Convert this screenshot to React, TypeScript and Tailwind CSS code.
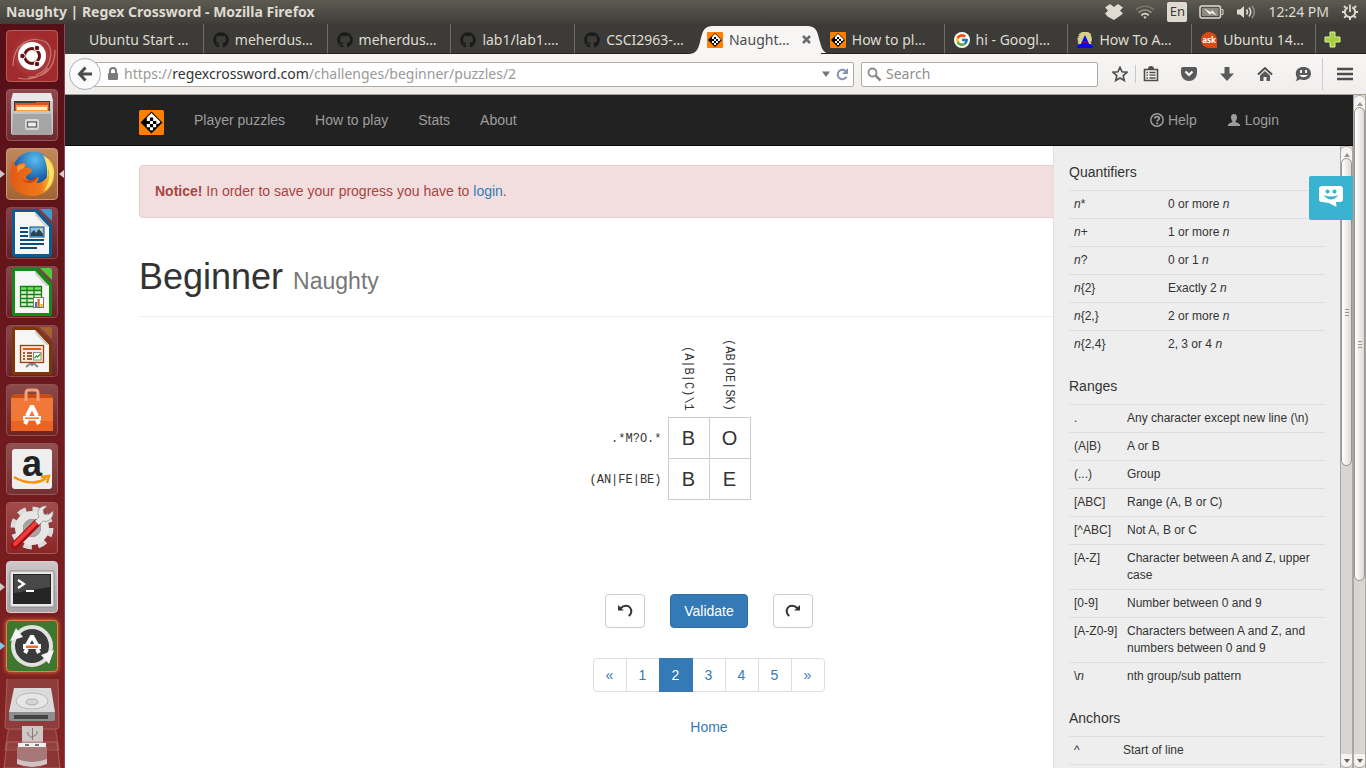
import React, { useState } from "react";
import { FaGithub } from "react-icons/fa";
import { FcGoogle } from "react-icons/fc";

const UI_FONT = "font-['Noto_Sans',sans-serif]";

/* ---------- shared drawings ---------- */

function CrosswordLogo({ className }: { className: string }) {
  return (
    <svg viewBox="0 0 24 24" className={className} aria-hidden="true">
      <rect width="24" height="24" rx="1.5" fill="#ff8000" />
      <path d="M12 1.500 22.500 12 12 22.500 1.500 12Z" fill="#000" />
      <path d="M12 2.800 20.800 11.600 18.500 13.500H16.500V10.500H13.500V7.500H10.500V4.500Z" fill="#fff" />
      <path d="M7.500 7.500h3v3h-3zM10.500 10.500h3v3h-3zM13.500 13.500h3v3h-3zM7.500 13.500h3v3h-3zM10.500 16.500h3v3h-3zM7.500 7.300 10.500 4.300V7.500z" fill="#fff" />
      <path d="M10.500 7.500h3v3h-3zM13.500 10.500h3v3h-3z" fill="#000" />
    </svg>
  );
}

function WizardIcon() {
  return (
    <svg viewBox="0 0 16 16" className="size-4" aria-hidden="true">
      <path d="M5 0h6l3 2 1 4-1 8H2L0 7l2-5z" fill="#d6d08b" />
      <path d="M2 3 0 8l2 2M14 3l2 5-2 3" stroke="#222" strokeDasharray="1 1" fill="none" />
      <path d="M8 3 14 16H2Z" fill="#0808ee" />
      <path d="M0 16c1-4 2-4 4-4l1 4zM16 16c-1-4-2-4-4-4l-1 4z" fill="#0808ee" />
      <path d="M6 9h4v2H6z" fill="#a00030" />
    </svg>
  );
}

function AskIcon() {
  return (
    <span className="flex size-4 items-center justify-center rounded-full rounded-br-none bg-[#dd4814] text-[8px] font-bold leading-none text-white">
      ask
    </span>
  );
}

/* ---------- top panel ---------- */

function TopPanel() {
  return (
    <header className={`flex h-6 shrink-0 items-center justify-between bg-linear-to-b from-[#5d5b51] to-[#3e3d39] pl-1.5 pr-[7px] text-[#dfdbd2] ${UI_FONT}`}>
      <span className="text-sm font-bold">Naughty | Regex Crossword - Mozilla Firefox</span>
      <div className="flex items-center gap-3">
        <svg viewBox="0 0 18 16" className="h-4 w-[18px]" fill="currentColor" aria-hidden="true">
          <path d="M5 0 9 3l4-3 5 3.500-3 3 3 3-2.500 2L9 16l-6.500-3.500L0 9.500l3-3-3-3z" />
        </svg>
        <svg viewBox="0 0 20 16" className="h-4 w-5" fill="none" strokeWidth="1.7" aria-hidden="true">
          <path d="M1 6c5-5 13-5 18 0" stroke="#77756c" />
          <path d="M3.600 8.700c3.700-3.600 9.100-3.600 12.800 0" stroke="#99968c" />
          <path d="M6.300 11.300c2.200-2.100 5.200-2.100 7.400 0" stroke="#dfdbd2" />
          <path d="M8.300 12.600h3.400L10 15z" fill="#dfdbd2" />
        </svg>
        <span className="flex size-5 items-center justify-center rounded-[2px] bg-[#dfdbd2] text-[13px] text-[#3c3b37]">En</span>
        <svg viewBox="0 0 25 14" className="h-[14px] w-[25px]" aria-hidden="true">
          <rect x="1" y="1" width="20.500" height="12" rx="2" fill="none" stroke="#dfdbd2" strokeWidth="1.500" />
          <rect x="3" y="3" width="16.500" height="8" fill="#8d8a81" />
          <path d="M22.500 4.500h1.500v5h-1.500" stroke="#dfdbd2" fill="none" />
          <path d="m5 3.500 7 3.500 1-2 5 5.500-6-2.500-1 2z" fill="#f4f1ea" />
        </svg>
        <svg viewBox="0 0 20 16" className="h-4 w-5" fill="none" strokeWidth="1.600" aria-hidden="true">
          <path d="M1 5.500h3L8 2v12l-4-3.500H1z" fill="#dfdbd2" />
          <path d="M10.500 5.500q2 2.500 0 5M13 3.500q3.500 4.500 0 9" stroke="#dfdbd2" />
          <path d="M15.800 1.800q5 6.200 0 12.400" stroke="#8d8a81" />
        </svg>
        <span className="text-sm">12:24 PM</span>
        <svg viewBox="0 0 18 18" className="size-[18px]" fill="none" stroke="#dfdbd2" aria-hidden="true">
          <path d="M6.800 4.300a5.200 5.200 0 1 0 4.400 0" strokeWidth="2" />
          <path d="M9 1.500V9" strokeWidth="1.800" />
          <path d="m4.800 4.800-1.800-1.800M13.200 4.800l1.800-1.800M3.500 9H1M17 9h-2.500M5 13l-1.800 1.800M13 13l1.800 1.800M9 14.500V17" strokeWidth="2" />
        </svg>
      </div>
    </header>
  );
}

/* ---------- launcher ---------- */

function Document({ color, corner, children }: { color: string; corner: string; children: React.ReactNode }) {
  return (
    <>
      <path d="M6 4q0-2 2-2h23l15 16v30q0 2-2 2H8q-2 0-2-2z" fill={color} />
      <path d="M34 2h10q2 0 2 2v10z" fill={corner} />
      <path d="M9 5h20l14 15v27H9z" fill="#f6f6f6" />
      <path d="M29 5v3l11 12h3z" fill="#cfcfcf" />
      {children}
    </>
  );
}

function UbuntuIcon() {
  return (
    <>
      <defs>
        <radialGradient id="dash">
          <stop offset="0" stopColor="#e08f8f" />
          <stop offset="1" stopColor="#a02a2c" stopOpacity="0" />
        </radialGradient>
      </defs>
      <circle cx="26" cy="26" r="25" fill="url(#dash)" />
      <path d="M7 36C7 14 24 5 40 12c9 8 5 28-10 33M49 20c0 17-9 28-27 27M12 48C24 51 36 47 42 38" fill="none" stroke="#d99a9a" strokeWidth="1.200" opacity=".7" />
      <circle cx="26" cy="26" r="14" fill="#fff" />
      <circle cx="26" cy="26" r="7.500" fill="none" stroke="#631316" strokeWidth="3" />
      <g fill="#631316" stroke="#fff" strokeWidth="1">
        <circle cx="16.500" cy="26" r="2.800" />
        <circle cx="31" cy="18" r="2.800" />
        <circle cx="31" cy="34" r="2.800" />
      </g>
    </>
  );
}

function FilesIcon() {
  return (
    <>
      <path d="M7 4h38l2 8v33H5V12z" fill="#c9c9c9" />
      <path d="M7 4h38l2 8H5z" fill="#e8e8e8" />
      <path d="M8 12h36v14H8z" fill="#3c3c3c" />
      <path d="M9 14h20l2-1h12v10H9z" fill="#d9541e" />
      <path d="M10 16h32v8H10z" fill="#f0a050" />
      <path d="M11 18h30v3H11z" fill="#fff0dc" />
      <path d="M7 22h38l1 24H6z" fill="#a5a5a5" />
      <path d="M7 22h38v3H7z" fill="#c4c4c4" />
      <rect x="19" y="30" width="14" height="11" rx="2" fill="#d9d9d9" />
      <rect x="21.500" y="33" width="9" height="5" fill="#eee" stroke="#666" strokeWidth="1.300" />
    </>
  );
}

function FirefoxIcon() {
  return (
    <>
      <defs>
        <radialGradient id="globe" cx=".55" cy=".2" r=".8">
          <stop offset="0" stopColor="#58bdec" />
          <stop offset=".6" stopColor="#1a62ab" />
          <stop offset="1" stopColor="#103b7d" />
        </radialGradient>
        <linearGradient id="fox" x1="0" y1="0" x2="1" y2="0">
          <stop offset="0" stopColor="#e25a16" />
          <stop offset=".7" stopColor="#f0791b" />
          <stop offset="1" stopColor="#fbd743" />
        </linearGradient>
      </defs>
      <circle cx="27" cy="24" r="20.500" fill="url(#globe)" />
      <path d="M7 12c0 3 1 4 3 6 3-3 6-4 9-3l1 5c3 0 6 0 6 3-1 3-6 3-6 7 3 4 8 2 11-1 3 1 1 4-1 6 9 0 14-8 13-15 2 2 2 5 2 7 2-7-1-14-5-18 6 3 9 11 8 19-1 12-10 20-22 20C12 48 4 39 4 28c0-6 1-11 3-16z" fill="url(#fox)" />
      <path d="M37 7c7 4 11 12 10 21-1 7-4 12-9 15 5-7 7-15 4-23 1 4 1 7-1 10 1-10-1-17-4-23z" fill="#ffe463" />
      <path d="M11 19c3-3 5-3 8-3l-1 4c-3 1-5 2-6 5z" fill="#f79636" />
      <path d="M16 31c4 3 9 2 14-2 2 0 1 2 0 3-4 4-11 4-14-1z" fill="#a92d10" opacity=".6" />
    </>
  );
}

function WriterIcon() {
  return (
    <Document color="#0e5c8f" corner="#3f9bc9">
      <path d="M14 21h8M14 25h8M14 29h8M14 33h24M14 37h24M14 41h17" stroke="#0b4e79" strokeWidth="2" />
      <rect x="24" y="20" width="14" height="10" fill="#85c4e8" stroke="#0b4e79" />
      <path d="M25 29v-3l3-3 2 3 3-4 4 5v2z" fill="#274457" />
      <circle cx="35" cy="22.500" r="1.300" fill="#f8d348" />
    </Document>
  );
}

function CalcIcon() {
  return (
    <Document color="#168a16" corner="#51ca3d">
      <rect x="14" y="20" width="22" height="20" fill="#d8f8cf" />
      <path d="M14 20h22v4H14z" fill="#79dd62" />
      <path d="M14.500 20.500h21v20h-21zM21 20v20M28 20v20M14 24.500h22M14 28.500h22M14 32.500h22M14 36.500h22" fill="none" stroke="#148014" strokeWidth="1.300" />
      <rect x="27.500" y="31.500" width="10" height="10" fill="#fff" stroke="#777" />
      <path d="M29 36h2v5h-2z" fill="#2777c8" />
      <path d="M31.500 33h2.200v8h-2.200z" fill="#e25c1e" />
      <path d="M34.500 38h2.200v3h-2.200z" fill="#f0b400" />
    </Document>
  );
}

function ImpressIcon() {
  return (
    <Document color="#813607" corner="#a8622c">
      <path d="m26 37-6 5M26 37l6 5M26 36v5" stroke="#888" strokeWidth="2" />
      <rect x="14.500" y="20.500" width="23" height="17" fill="#fde9db" stroke="#9f3d0a" strokeWidth="1.300" />
      <path d="M17 24h18" stroke="#d95f1c" strokeWidth="2" />
      <path d="M17 28h2M17 31h2M17 34h2M21 28h5M21 31h5M21 34h5" stroke="#7d3008" strokeWidth="1.600" />
      <rect x="27.500" y="27.500" width="7.500" height="7.500" fill="#fff" stroke="#888" />
      <path d="m28.500 33 2-2 1 1 3-3" stroke="#1ba31b" fill="none" strokeWidth="1.300" />
    </Document>
  );
}

function SoftwareIcon() {
  return (
    <>
      <path d="M5 13 8 10h36l3 3v34H5z" fill="#c64d16" />
      <path d="M5 14h42v33H5z" fill="#f2783a" />
      <path d="M5 37h42v10H5z" fill="#ed6422" />
      <path d="M20 17V9q0-3 3-3h6q3 0 3 3v8" fill="none" stroke="#f0a27d" strokeWidth="3" />
      <path d="m19 40 2-4M33 40l-2-4M21 32l4.500-9h1L31 32" fill="none" stroke="#fff" strokeWidth="4" />
      <path d="M17 32h18v4.500H17z" fill="#fff" />
      <path d="M19 34.200h14" stroke="#f2783a" strokeWidth="1.600" />
    </>
  );
}

function AmazonIcon() {
  return (
    <>
      <rect x="6" y="6" width="40" height="40" rx="3" fill="#efefef" />
      <text x="26" y="33" textAnchor="middle" fontFamily="Liberation Sans, sans-serif" fontWeight="700" fontSize="36" fill="#222">a</text>
      <path d="M8 34c11 7 25 7 32 1M35 34l8-1-2 7" fill="none" stroke="#f79400" strokeWidth="2.500" />
    </>
  );
}

function SettingsIcon() {
  return (
    <>
      <circle cx="26" cy="26" r="18" fill="none" stroke="#dcdcda" strokeWidth="7" strokeDasharray="8 6.130" />
      <circle cx="26" cy="26" r="13" fill="none" stroke="#e6e6e4" strokeWidth="8" />
      <circle cx="26" cy="26" r="9" fill="#a7a5a4" />
      <path d="M9 43 31 21" stroke="#a60d12" strokeWidth="7.500" strokeLinecap="round" />
      <path d="M9 42 30 21" stroke="#ee3c3c" strokeWidth="4" strokeLinecap="round" />
      <path d="m29 19 4 4 4-4c5 2 11-3 10-10l-5 4-4-1-1-4 4-4c-7-1-11 5-8 11z" fill="#e6e6e6" stroke="#8c8c8c" strokeWidth=".7" />
    </>
  );
}

function TerminalIcon() {
  return (
    <>
      <rect x="4" y="10" width="44" height="36" rx="1" fill="#e9e9e9" stroke="#888" />
      <rect x="7" y="13" width="38" height="30" fill="#252525" />
      <path d="M8 14h36v12L8 32z" fill="#484848" />
      <path d="m12 19 6 4-6 4M20 30h8" fill="none" stroke="#fff" strokeWidth="2.200" />
    </>
  );
}

function UpdaterIcon() {
  return (
    <>
      <circle cx="26" cy="26" r="17" fill="#3b3b3b" />
      <circle cx="26" cy="26" r="19" fill="none" stroke="#e2e2e0" strokeWidth="4" />
      <path d="m4 21 6-13 7 9zM48 30l-5 14-8-9z" fill="#f5f5f5" />
      <path d="m19 33 2-4M33 33l-2-4M21 25l4.500-8h1L31 25" fill="none" stroke="#fff" strokeWidth="4" />
      <path d="M17 24h18v5H17z" fill="#fff" />
      <path d="M20 26.800h12" stroke="#f26a20" strokeWidth="2.500" />
    </>
  );
}

const LAUNCHER: { name: string; tile: string; Icon: () => React.ReactElement; left?: string; right?: boolean }[] = [
  { name: "Dash home", tile: "bg-[#a02a2c] border-[#bd5c5d]", Icon: UbuntuIcon },
  { name: "Files", tile: "bg-linear-to-b from-[#92474d] to-[#6c2b30] border-[#94595d]", Icon: FilesIcon },
  { name: "Firefox", tile: "bg-linear-to-b from-[#c1895c] to-[#a36434] border-[#c49a77]", Icon: FirefoxIcon, left: "text-[#cfc5c5]", right: true },
  { name: "Writer", tile: "bg-linear-to-b from-[#84424a] to-[#611f28] border-[#86474e]", Icon: WriterIcon },
  { name: "Calc", tile: "bg-linear-to-b from-[#84474a] to-[#672328] border-[#8a4b4f]", Icon: CalcIcon },
  { name: "Impress", tile: "bg-linear-to-b from-[#864546] to-[#682427] border-[#8b4d50]", Icon: ImpressIcon },
  { name: "Software Center", tile: "bg-linear-to-b from-[#8b4a4a] to-[#702323] border-[#93504f]", Icon: SoftwareIcon },
  { name: "Amazon", tile: "bg-linear-to-b from-[#8f5052] to-[#743033] border-[#955557]", Icon: AmazonIcon },
  { name: "System Settings", tile: "bg-linear-to-b from-[#a04b4b] to-[#8b2526] border-[#a75a5a]", Icon: SettingsIcon },
  { name: "Terminal", tile: "bg-linear-to-b from-[#cfc6c8] to-[#a79fa3] border-[#d8cfd1]", Icon: TerminalIcon, left: "text-[#cfc5c5]" },
  { name: "Software Updater", tile: "bg-[#3d7730] border-[#e97f3c] shadow-[0_0_4px_#f08040]", Icon: UpdaterIcon, left: "text-[#7fc9f0]" },
];

function Launcher() {
  return (
    <nav aria-label="Launcher" className="flex w-[65px] shrink-0 flex-col gap-[7px] overflow-hidden border-r border-[#8d4a50] bg-linear-to-b from-[#550f16] to-[#852323] pt-1.5">
      {LAUNCHER.map(({ name, tile, Icon, left, right }) => (
        <div key={name} className="relative flex shrink-0 justify-center">
          {left && (
            <svg viewBox="0 0 5 8" className={`absolute left-0 top-[22px] h-2 w-[5px] ${left}`} aria-hidden="true">
              <path d="M0 0 5 4 0 8z" fill="currentColor" />
            </svg>
          )}
          <button type="button" aria-label={name} className={`size-[52px] rounded-[4px] border ${tile}`}>
            <svg viewBox="1 1 50 50" className="size-[50px]" aria-hidden="true">
              <Icon />
            </svg>
          </button>
          {right && (
            <svg viewBox="0 0 5 8" className="absolute right-0 top-[22px] h-2 w-[5px]" aria-hidden="true">
              <path d="M5 0 0 4l5 4z" fill="#d9d0d0" />
            </svg>
          )}
        </div>
      ))}
      <svg viewBox="0 0 64 91" className="h-[91px] w-16 shrink-0" aria-hidden="true">
        <path d="M9 47h46l4 24H5z" fill="#9c5050" fillOpacity=".45" stroke="#b06a6a" strokeOpacity=".7" />
        <path d="M7 1q0-3 3-3h45q3 0 3 3l1 46q0 3-3 3H8q-3 0-3-3z" fill="#8f3c3c" stroke="#a86060" />
        <path d="M14 9h37l4 24H9z" fill="#dadada" />
        <path d="M9 33h46v7q0 2-2 2H11q-2 0-2-2z" fill="#8e8e8e" />
        <path d="M14 36h34v4H14z" fill="#444" />
        <ellipse cx="32" cy="22" rx="16" ry="8" fill="#e6e6e6" stroke="#b9b9b9" />
        <ellipse cx="32" cy="23" rx="6" ry="3" fill="#d6d6d6" stroke="#aaa" />
        <path d="M22 47h21v17H22z" fill="#cfc6c6" />
        <path d="M32.500 49v12M28 53v3l4.500 3M37 52v3l-4.500 3" stroke="#8b7777" fill="none" />
        <path d="M7 63h50l3 26H4z" fill="#9c5050" fillOpacity=".4" stroke="#b87676" strokeOpacity=".7" />
        <path d="M18 64h28v4H18z" fill="#eee" />
        <path d="M25 65h4v2h-4zM35 65h4v2h-4z" fill="#777" />
        <path d="M17 68h30v16q-15 6-30 0z" fill="#a87878" />
        <path d="M17 80q15 6 30 0v5q-15 6-30 0z" fill="#cfc3c3" />
      </svg>
    </nav>
  );
}

/* ---------- browser chrome ---------- */

const TABS: { title: string; icon: React.ReactNode; active?: boolean }[] = [
  { title: "Ubuntu Start …", icon: null },
  { title: "meherdus…", icon: <FaGithub className="size-4 text-[#1b1b1b]" /> },
  { title: "meherdus…", icon: <FaGithub className="size-4 text-[#1b1b1b]" /> },
  { title: "lab1/lab1.…", icon: <FaGithub className="size-4 text-[#1b1b1b]" /> },
  { title: "CSCI2963-…", icon: <FaGithub className="size-4 text-[#1b1b1b]" /> },
  { title: "Naught…", icon: <CrosswordLogo className="size-4" />, active: true },
  { title: "How to pl…", icon: <CrosswordLogo className="size-4" /> },
  { title: "hi - Googl…", icon: <span className="flex size-4 items-center justify-center rounded-full bg-white"><FcGoogle className="size-3.5" /></span> },
  { title: "How To A…", icon: <WizardIcon /> },
  { title: "Ubuntu 14…", icon: <AskIcon /> },
];

function TabStrip() {
  return (
    <div className={`flex h-[30px] shrink-0 bg-[#3c3b37] pl-[15px] text-sm text-[#dfdbd2] ${UI_FONT}`}>
      <div role="tablist" className="flex min-w-0 flex-1">
        {TABS.map((tab, i) => {
          const beforeActive = TABS[i + 1]?.active;
          return (
            <button
              key={i}
              type="button"
              role="tab"
              aria-selected={!!tab.active}
              className={`relative flex min-w-0 flex-1 basis-0 items-center gap-1.5 whitespace-nowrap border-b pl-[9px] pt-0.5 ${
                tab.active
                  ? "border-transparent text-[#4c4c4c]"
                  : beforeActive
                    ? "border-[#252422]"
                    : "border-[#252422] border-r border-r-[#6f6d63]"
              }`}
            >
              {tab.active && (
                <svg viewBox="0 0 144 30" preserveAspectRatio="none" className="absolute -left-2.5 top-0 h-[30px] w-36" aria-hidden="true">
                  <path d="M0 30c8 0 10-4 12-12C15 7 15 2 26 2h92c11 0 11 5 14 16 2 8 4 12 12 12z" fill="#f7f6f5" />
                </svg>
              )}
              {tab.icon && <span className="relative shrink-0">{tab.icon}</span>}
              <span className="relative">{tab.title}</span>
              {tab.active && (
                <svg viewBox="0 0 9 9" className="relative ml-1.5 size-[9px]" aria-hidden="true">
                  <path d="m1 1 7 7M8 1 1 8" stroke="#6b6b6b" strokeWidth="2.500" />
                </svg>
              )}
            </button>
          );
        })}
      </div>
      <button type="button" aria-label="New tab" className="flex w-[50px] items-center border-b border-[#252422] pl-2 pt-0.5">
        <svg viewBox="0 0 17 17" className="size-[17px]" aria-hidden="true">
          <path d="M6 1h5v5h5v5h-5v5H6v-5H1V6h5z" fill="#a6cf3c" stroke="#d8efa0" />
        </svg>
      </button>
    </div>
  );
}

function ToolbarIcon({ label, className, children }: { label: string; className: string; children: React.ReactNode }) {
  return (
    <button type="button" aria-label={label} className={`flex h-8 shrink-0 items-center justify-center ${className}`}>
      <svg viewBox="0 0 16 16" className="size-4 text-[#4d4d4d]" fill="none" stroke="currentColor" aria-hidden="true">
        {children}
      </svg>
    </button>
  );
}

function Toolbar() {
  const [query, setQuery] = useState("");
  return (
    <div className={`flex h-[41px] shrink-0 items-center border-b border-[#a39f96] bg-linear-to-b from-[#f7f6f5] to-[#efeeec] pl-1 ${UI_FONT}`}>
      <button type="button" aria-label="Back" className="relative z-10 flex size-8 shrink-0 items-center justify-center rounded-full border border-[#a9b0b8] bg-[#fbfbfb]">
        <svg viewBox="0 0 16 16" className="size-4" fill="none" stroke="#4d4d4d" strokeWidth="3" aria-hidden="true">
          <path d="M8.500 1.500 2.500 8l6 6.500M3 8h12" />
        </svg>
      </button>
      <div className="-ml-3 mr-[7px] flex h-[25px] min-w-0 flex-1 items-center rounded-[2px] border border-[#b0aca5] bg-white pl-[17px] pr-1">
        <svg viewBox="0 0 12 14" className="mr-[5px] h-3.5 w-3 shrink-0" aria-hidden="true">
          <path d="M3 7V4a3 3 0 0 1 6 0v3" fill="none" stroke="#7b7b7b" strokeWidth="2" />
          <rect x="1" y="6" width="10" height="7" rx="1" fill="#7b7b7b" />
        </svg>
        <p className="min-w-0 flex-1 truncate text-sm text-[#9a9a9a]">
          https://<span className="text-[#333]">regexcrossword.com</span>/challenges/beginner/puzzles/2
        </p>
        <svg viewBox="0 0 8 6" className="mr-1.5 h-1.5 w-2" aria-hidden="true">
          <path d="M0 .5h8L4 6z" fill="#777" />
        </svg>
        <button type="button" aria-label="Reload">
          <svg viewBox="0 0 13 13" className="size-[13px]" aria-hidden="true">
            <path d="M10.500 8.800A4.700 4.700 0 1 1 9.500 3" fill="none" stroke="#8496ab" strokeWidth="2" />
            <path d="M12 0v6H6z" fill="#8496ab" />
          </svg>
        </button>
      </div>
      <div className="flex h-[25px] w-[237px] shrink-0 items-center rounded-[2px] border border-[#b0aca5] bg-white pl-[5px]">
        <svg viewBox="0 0 15 15" className="size-[15px]" fill="none" stroke="#8a8a8a" aria-hidden="true">
          <circle cx="5.500" cy="5.500" r="4" strokeWidth="1.800" />
          <path d="m8.500 8.500 5 5" strokeWidth="2.500" />
        </svg>
        <input
          type="search"
          aria-label="Search"
          placeholder="Search"
          value={query}
          onChange={(e) => setQuery(e.target.value)}
          className="min-w-0 flex-1 bg-transparent pl-1 text-sm text-[#333] outline-none placeholder:text-[#8e8e8e]"
        />
      </div>
      <ToolbarIcon label="Bookmark this page" className="ml-1.5 w-[31px]">
        <path d="m8 1.300 2 4.500 4.900.5-3.700 3.300 1.100 4.900L8 12l-4.300 2.500 1.100-4.900L1.100 6.300 6 5.800z" strokeWidth="1.600" />
      </ToolbarIcon>
      <span className="h-[18px] w-px bg-[#c5c9ce]" />
      <ToolbarIcon label="Show bookmarks" className="mr-1 w-[30px]">
        <path d="M1.500 3.500h13v11h-13z" strokeWidth="1.600" />
        <path d="M5 3q0-3 3-3t3 3z" fill="currentColor" stroke="none" />
        <path d="M3.500 6.500H5M6.500 6.500h6M3.500 9.200H5M6.500 9.200h6M3.500 12H5M6.500 12h6" strokeWidth="1.300" />
      </ToolbarIcon>
      <ToolbarIcon label="Save to Pocket" className="w-[38px]">
        <path d="M0 3q0-2 2-2h12q2 0 2 2v4a8 8 0 0 1-16 0z" fill="#5a5a5a" stroke="none" />
        <path d="m4.500 5.500 3.500 3.500 3.500-3.500" stroke="#fff" strokeWidth="2.200" />
      </ToolbarIcon>
      <ToolbarIcon label="Downloads" className="w-[38px]">
        <path d="M5.500 1h5v6.500h4.500L8 15 1 7.500h4.500z" fill="#5a5a5a" stroke="none" />
      </ToolbarIcon>
      <ToolbarIcon label="Home" className="w-[38px]">
        <path d="M1 8.500 8 2l7 6.500" strokeWidth="2" />
        <path d="m8 5 5 4.500V15H9.500v-4h-3v4H3V9.500z" fill="#5a5a5a" stroke="none" />
      </ToolbarIcon>
      <ToolbarIcon label="Start a conversation" className="w-[38px]">
        <path d="M8.500 1C13 1 16 3.700 16 7.500S13 14 8.500 14q-2 0-3.500-.7Q3 15 .5 15 2 13.500 2 11.500.8 9.700.8 7.500C.8 3.700 4 1 8.500 1z" fill="#5a5a5a" stroke="none" />
        <path d="M6 4v3M11 4v3" stroke="#fff" strokeWidth="1.800" />
        <path d="M4 9q4.500 4.500 9 0z" fill="#fff" stroke="none" />
      </ToolbarIcon>
      <span className="h-8 w-px bg-[#c9cdd3]" />
      <ToolbarIcon label="Menu" className="w-[43px]">
        <path d="M0 3h16M0 8h16M0 13h16" strokeWidth="2.600" />
      </ToolbarIcon>
    </div>
  );
}

function Scrollbar({ thumb }: { thumb: string }) {
  return (
    <div aria-hidden="true" className="flex w-[13px] shrink-0 flex-col border-x border-[#aaa6a0] bg-[#d8d6d4]">
      <div className="flex h-5 shrink-0 items-start justify-center rounded-t-full border-t border-[#aaa6a0] bg-[#f5f4f3] pt-1.5">
        <svg viewBox="0 0 6 4" className="h-1 w-1.5"><path d="M0 4h6L3 0z" fill="#99958f" /></svg>
      </div>
      <div className={`-mt-2 flex shrink-0 flex-col items-center justify-center gap-0.5 rounded-full border border-[#96928c] bg-linear-to-r from-white to-[#dddbd9] ${thumb}`}>
        <span className="h-px w-1 bg-[#99958f]" />
        <span className="h-px w-1 bg-[#99958f]" />
        <span className="h-px w-1 bg-[#99958f]" />
      </div>
      <div className="flex-1" />
      <div className="flex h-3.5 shrink-0 items-center justify-center rounded-b-full border-b border-[#aaa6a0] bg-[#f5f4f3]">
        <svg viewBox="0 0 6 4" className="h-1 w-1.5"><path d="M0 0h6L3 4z" fill="#66625c" /></svg>
      </div>
    </div>
  );
}

/* ---------- page ---------- */

function Navbar() {
  const link = "flex items-center gap-1 px-[15px] text-[#9d9d9d]";
  return (
    <nav className="h-[51px] shrink-0 border-b border-[#080808] bg-[#222]">
      <div className="mx-auto flex h-full max-w-[1170px] items-stretch">
        <a href="#" aria-label="Regex Crossword" className="flex items-center px-[15px] pt-1">
          <CrosswordLogo className="size-[25px]" />
        </a>
        <a href="#puzzles" className={link}>Player puzzles</a>
        <a href="#how" className={link}>How to play</a>
        <a href="#stats" className={link}>Stats</a>
        <a href="#about" className={link}>About</a>
        <a href="#help" className={`${link} ml-auto`}>
          <svg viewBox="0 0 14 14" className="size-3.5" fill="none" stroke="currentColor" aria-hidden="true">
            <circle cx="7" cy="7" r="6.200" strokeWidth="1.500" />
            <path d="M4.800 5.500C4.800 3 9.300 3 9.300 5.400 9.300 6.800 7.200 6.700 7.200 8.500" strokeWidth="1.800" />
            <path d="M6.200 9.500h2v1.700h-2z" fill="currentColor" stroke="none" />
          </svg>
          Help
        </a>
        <a href="#login" className={link}>
          <svg viewBox="0 0 14 14" className="size-3.5" fill="currentColor" aria-hidden="true">
            <path d="M7 1c2 0 3 1.300 3 3.200C10 6 9.300 7.300 8.600 8v1c.8.700 4.400 1.200 4.400 3.200v.8H1v-.8C1 10.200 4.600 9.700 5.400 9V8C4.700 7.300 4 6 4 4.200 4 2.300 5 1 7 1z" />
          </svg>
          Login
        </a>
      </div>
    </nav>
  );
}

const CLUE = "font-['Liberation_Mono',monospace] text-[12px] leading-4";

function Puzzle() {
  const [cells, setCells] = useState(["B", "O", "B", "E"]);
  const rows = [".*M?O.*", "(AN|FE|BE)"];
  const columns = ["(A|B|C)\\1", "(AB|OE|SK)"];
  return (
    <div className="grid grid-cols-[1fr_auto_1fr] pt-5">
      <div />
      <div className="flex h-20 items-end pb-1.5">
        {columns.map((c) => (
          <div key={c} className="flex w-[41px] justify-center">
            <span className={`${CLUE} [writing-mode:vertical-rl]`}>{c}</span>
          </div>
        ))}
      </div>
      <div />
      <div className="flex flex-col items-end pr-1.5">
        {rows.map((r) => (
          <span key={r} className={`${CLUE} flex h-[41px] items-center pt-0.5`}>{r}</span>
        ))}
      </div>
      <div className="grid grid-cols-2 border-l border-t border-[#ccc]">
        {cells.map((v, i) => (
          <input
            key={i}
            aria-label={`Cell ${i + 1}`}
            maxLength={1}
            value={v}
            onChange={(e) => setCells(cells.map((c, j) => (j === i ? e.target.value.toUpperCase() : c)))}
            className="size-[41px] border-b border-r border-[#ccc] text-center text-xl outline-none"
          />
        ))}
      </div>
      <div />
    </div>
  );
}

function Arrow({ flip }: { flip?: boolean }) {
  return (
    <svg viewBox="0 0 16 14" className={`h-3.5 w-4 ${flip ? "-scale-x-100" : ""}`} aria-hidden="true">
      <path d="M3.500 4.200C7 .8 11 1 13 3.500c2.200 2.800 1.500 6.500-1.300 8.500" fill="none" stroke="#333" strokeWidth="2" />
      <path d="M1 1v5.500h5.800z" fill="#333" />
    </svg>
  );
}

function Content() {
  const iconButton = "flex h-[34px] w-10 items-center justify-center rounded-[4px] border border-[#ccc] bg-white";
  const pages = ["«", "1", "2", "3", "4", "5", "»"];
  return (
    <main className="mx-auto w-full max-w-[1170px] px-[15px] pt-[19px]">
      <div className="rounded-[4px] border border-[#ebccd1] bg-[#f2dede] px-[15px] py-[15px] leading-[21px] text-[#a94442]">
        <strong>Notice!</strong> In order to save your progress you have to <a href="#login" className="text-[#337ab7]">login</a>.
      </div>
      <h1 className="mt-[39px] border-b border-[#eee] pb-[15px] text-4xl leading-10">
        Beginner <small className="text-[23px] text-[#777]">Naughty</small>
      </h1>
      <Puzzle />
      <div className="mt-[94px] flex justify-center gap-[25px]">
        <button type="button" aria-label="Undo" className={iconButton}><Arrow /></button>
        <button type="button" className="h-[34px] rounded-[4px] border border-[#2e6da4] bg-[#337ab7] px-[13px] text-white">Validate</button>
        <button type="button" aria-label="Redo" className={iconButton}><Arrow flip /></button>
      </div>
      <div className="mt-[30px] flex justify-center">
        {pages.map((p) => (
          <a
            key={p}
            href={`#${p}`}
            className={`-ml-px flex h-[34px] w-[34px] items-center justify-center border first:rounded-l-[4px] last:rounded-r-[4px] ${
              p === "2" ? "z-10 border-[#337ab7] bg-[#337ab7] text-white" : "border-[#ddd] bg-white text-[#337ab7]"
            }`}
          >
            {p}
          </a>
        ))}
      </div>
      <p className="mt-[25px] text-center">
        <a href="#home" className="text-[#337ab7]">Home</a>
      </p>
    </main>
  );
}

const n = <i>n</i>;

const REFERENCE: { title: string; col: string; rows: [React.ReactNode, React.ReactNode][] }[] = [
  {
    title: "Quantifiers",
    col: "w-[94px]",
    rows: [
      [<>{n}*</>, <>0 or more {n}</>],
      [<>{n}+</>, <>1 or more {n}</>],
      [<>{n}?</>, <>0 or 1 {n}</>],
      [<>{n}{"{2}"}</>, <>Exactly 2 {n}</>],
      [<>{n}{"{2,}"}</>, <>2 or more {n}</>],
      [<>{n}{"{2,4}"}</>, <>2, 3 or 4 {n}</>],
    ],
  },
  {
    title: "Ranges",
    col: "w-[53px]",
    rows: [
      [".", "Any character except new line (\\n)"],
      ["(A|B)", "A or B"],
      ["(...)", "Group"],
      ["[ABC]", "Range (A, B or C)"],
      ["[^ABC]", "Not A, B or C"],
      ["[A-Z]", "Character between A and Z, upper case"],
      ["[0-9]", "Number between 0 and 9"],
      ["[A-Z0-9]", "Characters between A and Z, and numbers between 0 and 9"],
      [<>\{n}</>, "nth group/sub pattern"],
    ],
  },
  {
    title: "Anchors",
    col: "w-[49px]",
    rows: [["^", "Start of line"]],
  },
];

function Sidebar() {
  return (
    <aside className="absolute inset-y-0 right-0 flex w-[300px] border-l border-[#e0e0e0] bg-[#eee]">
      <div className="min-w-0 flex-1 overflow-hidden px-[15px] pt-[18px]">
        {REFERENCE.map((s) => (
          <section key={s.title} className="group mb-5">
            <h2 className="mb-2.5 leading-4">{s.title}</h2>
            <table className="w-full table-fixed border-collapse border-[#ddd] text-xs leading-[17px] group-last:border-b">
              <tbody>
                {s.rows.map(([a, b], i) => (
                  <tr key={i} className="border-t border-[#ddd] align-top">
                    <td className={`whitespace-nowrap py-[5px] pl-[5px] ${s.col}`}>{a}</td>
                    <td className="p-[5px]">{b}</td>
                  </tr>
                ))}
              </tbody>
            </table>
          </section>
        ))}
      </div>
      <Scrollbar thumb="h-[308px]" />
      <button type="button" aria-label="Open chat" className="absolute right-0 top-[30px] flex size-11 items-center justify-center rounded-l-[2px] bg-[#39b3d0]">
        <svg viewBox="0 0 26 24" className="-mt-1 h-6 w-[26px]" aria-hidden="true">
          <path d="M4 2h18q3 0 3 3v10q0 3-3 3h-4l.5 5L11 19l-7-1q-3 0-3-3V5q0-3 3-3z" fill="#fff" />
          <circle cx="9.500" cy="7.500" r="2" fill="#39b3d0" />
          <circle cx="16.500" cy="7.500" r="2" fill="#39b3d0" />
          <path d="M5.500 11q7.500 3 15 0-7.500 9-15 0z" fill="#39b3d0" />
        </svg>
      </button>
    </aside>
  );
}

export default function App() {
  return (
    <div className="flex h-screen flex-col overflow-hidden">
      <TopPanel />
      <div className="flex min-h-0 flex-1">
        <Launcher />
        <div className="flex min-w-0 flex-1 flex-col">
          <TabStrip />
          <Toolbar />
          <div className="flex min-h-0 flex-1">
            <div className="flex min-w-0 flex-1 flex-col bg-white font-['Liberation_Sans',Arial,sans-serif] text-sm text-[#333]">
              <Navbar />
              <div className="relative min-h-0 flex-1 overflow-hidden">
                <Content />
                <Sidebar />
              </div>
            </div>
            <Scrollbar thumb="h-[474px]" />
          </div>
        </div>
      </div>
    </div>
  );
}
